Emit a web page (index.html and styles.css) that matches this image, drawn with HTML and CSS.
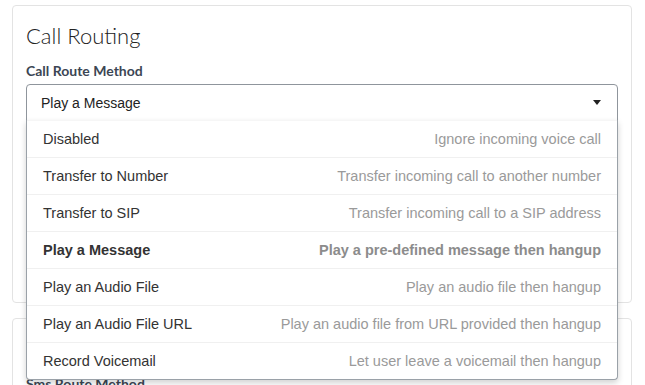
FILE: index.html
```html
<!DOCTYPE html>
<html lang="en">
<head>
  <meta charset="UTF-8" />
  <title>Call Routing</title>
  <link rel="stylesheet" href="styles.css">
</head>
<body>
<div class="page">
  <div class="card">
    <h2 class="card-title">Call Routing</h2>
    <label class="field-label">Call Route Method</label>
    <div class="select-wrap">
      <div class="select">
        <span>Play a Message</span>
        <span class="caret"></span>
      </div>
      <ul class="menu">
        <li><span class="opt">Disabled</span><span class="desc">Ignore incoming voice call</span></li>
        <li><span class="opt">Transfer to Number</span><span class="desc">Transfer incoming call to another number</span></li>
        <li><span class="opt">Transfer to SIP</span><span class="desc">Transfer incoming call to a SIP address</span></li>
        <li class="active"><span class="opt">Play a Message</span><span class="desc">Play a pre-defined message then hangup</span></li>
        <li><span class="opt">Play an Audio File</span><span class="desc">Play an audio file then hangup</span></li>
        <li><span class="opt">Play an Audio File URL</span><span class="desc">Play an audio file from URL provided then hangup</span></li>
        <li><span class="opt">Record Voicemail</span><span class="desc">Let user leave a voicemail then hangup</span></li>
      </ul>
    </div>
    <div class="hidden-field"></div>
  </div>
  <div class="card">
    <h2 class="card-title">Sms Routing</h2>
    <label class="field-label">Sms Route Method</label>
  </div>
</div>
</body>
</html>
```

FILE: styles.css
```css
html, body {
    margin: 0;
    padding: 0;
    background: #fff;
    overflow: hidden;
}
.page {
    width: 620px;
    padding: 5px 0 0 12px;
    display: flex;
    flex-direction: column;
    gap: 15px;
}
.card {
    border: 1px solid #e3e3e3;
    border-radius: 4px;
    padding: 0 13px;
    background: #fff;
}
.card-title {
    margin: 17px 0 0;
    font-family: Lato, "Liberation Sans", sans-serif;
    font-weight: 300;
    font-size: 22px;
    line-height: 26px;
    color: #222;
}
.field-label {
    display: block;
    margin-top: 13px;
    font-family: Lato, "Liberation Sans", sans-serif;
    font-weight: 700;
    font-size: 14px;
    line-height: 17px;
    color: #3c4654;
}
.select-wrap {
    position: relative;
    margin-top: 5px;
}
.select {
    height: 35px;
    border: 1px solid #8f959c;
    border-radius: 4px 4px 0 0;
    padding: 0 16px 0 14px;
    display: flex;
    align-items: center;
    justify-content: space-between;
    font-family: "Liberation Sans", Arial, sans-serif;
    font-size: 14px;
    color: #222;
}
.caret {
    width: 0;
    height: 0;
    border-left: 4px solid transparent;
    border-right: 4px solid transparent;
    border-top: 5px solid #222;
}
.menu {
    position: absolute;
    top: 36px;
    left: 0;
    right: 0;
    margin: 0;
    padding: 0;
    list-style: none;
    background: #fff;
    border: 1px solid #9aa1a8;
    border-top: none;
    border-radius: 0 0 4px 4px;
    box-shadow: 0 3px 6px rgba(0, 0, 0, 0.18);
    z-index: 10;
    font-family: "Liberation Sans", Arial, sans-serif;
    font-size: 14.5px;
}
.menu li {
    height: 36px;
    border-top: 1px solid #f0f0f0;
    padding: 0 16px;
    display: flex;
    align-items: center;
    justify-content: space-between;
}
.menu li:first-child {
    border-top-color: #f6f6f6;
}
.opt {
    color: #333;
}
.desc {
    color: #9a9a9a;
}
.menu li.active .opt {
    font-weight: 700;
    color: #333;
}
.menu li.active .desc {
    font-weight: 700;
    color: #8c8c8c;
}
.hidden-field {
    height: 181px;
}
```
